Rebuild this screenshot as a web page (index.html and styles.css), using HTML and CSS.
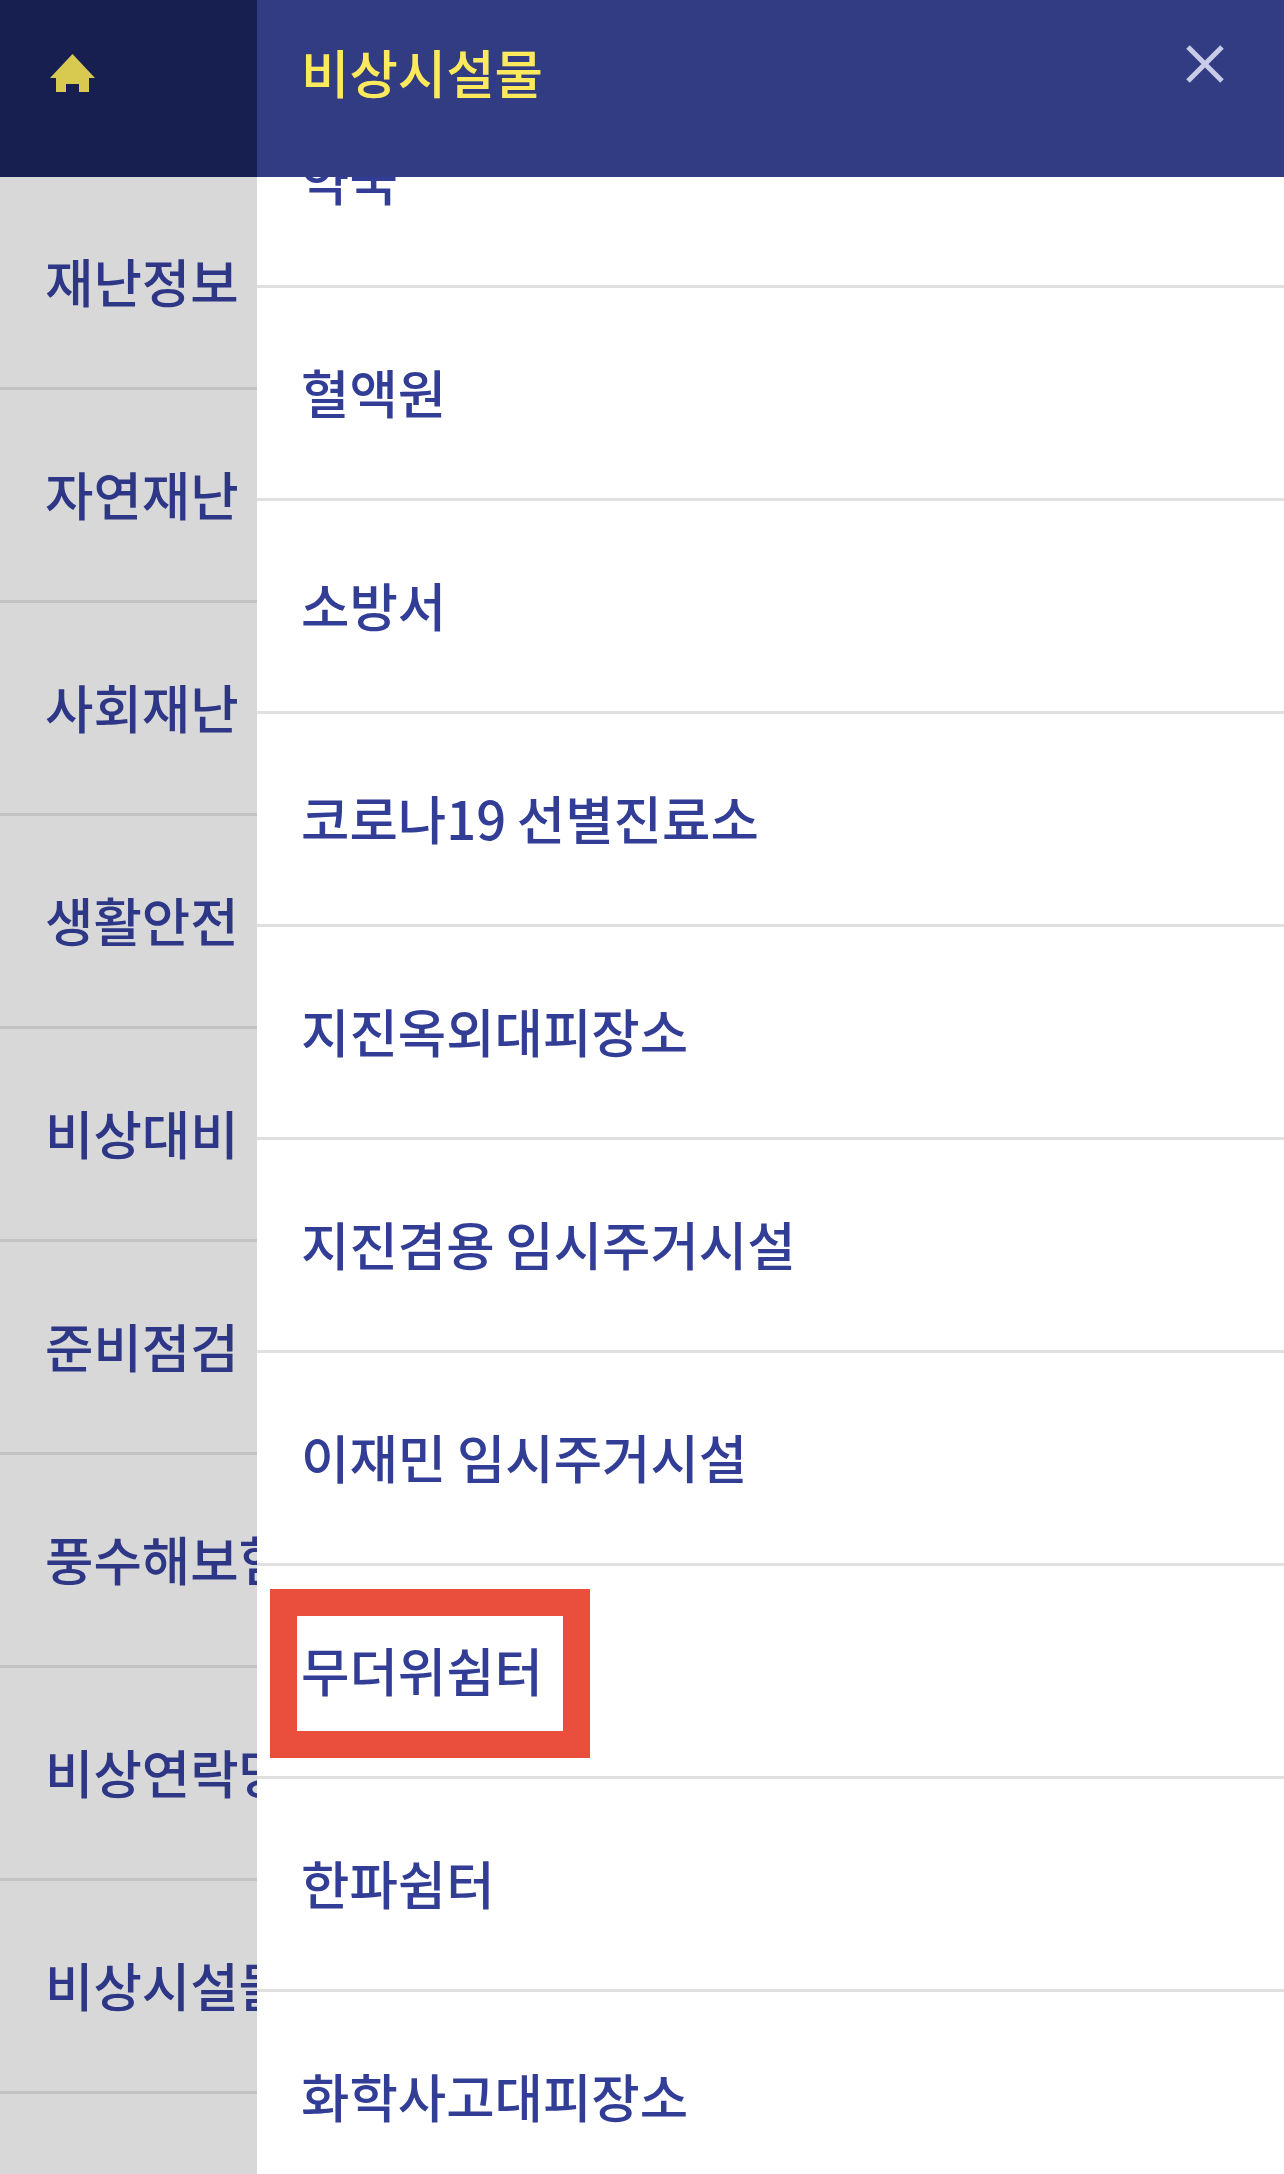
FILE: index.html
```html
<!DOCTYPE html>
<html lang="ko">
<head>
<meta charset="utf-8">
<title>비상시설물</title>
<link rel="stylesheet" href="styles.css">
</head>
<body>
<div class="app">
  <nav class="side">
    <a class="home" href="#" aria-label="홈">
      <svg class="home-icon" viewBox="0 0 45 38" aria-hidden="true"><path d="M22.5 0 45 24H39V38H29V30H16V38H6V24H0Z" fill="#d8c951"/></svg>
    </a>
    <ul class="side-list">
      <li class="side-item">재난정보</li>
      <li class="side-item">자연재난</li>
      <li class="side-item">사회재난</li>
      <li class="side-item">생활안전</li>
      <li class="side-item">비상대비</li>
      <li class="side-item">준비점검</li>
      <li class="side-item">풍수해보험</li>
      <li class="side-item">비상연락망</li>
      <li class="side-item">비상시설물</li>
    </ul>
  </nav>
  <main class="panel">
    <header class="panel-head">
      <h1 class="panel-title">비상시설물</h1>
      <svg class="close" viewBox="0 0 38 38" aria-hidden="true"><path d="M2 2 36 36M36 2 2 36" stroke="#c9cce8" stroke-width="5" fill="none"/></svg>
    </header>
    <ul class="facility-list">
      <li class="facility">약국</li>
      <li class="facility">혈액원</li>
      <li class="facility">소방서</li>
      <li class="facility">코로나19 선별진료소</li>
      <li class="facility">지진옥외대피장소</li>
      <li class="facility">지진겸용 임시주거시설</li>
      <li class="facility">이재민 임시주거시설</li>
      <li class="facility">무더위쉼터<span class="highlight"></span></li>
      <li class="facility">한파쉼터</li>
      <li class="facility">화학사고대피장소</li>
    </ul>
  </main>
</div>
</body>
</html>
```
FILE: styles.css
```css
* { box-sizing: border-box; }
html, body { margin: 0; padding: 0; }
body {
  width: 1284px;
  height: 2174px;
  overflow: hidden;
  background: #fff;
  font-family: "Noto Sans CJK KR", "Noto Sans", sans-serif;
  font-size: 52.6px;
  word-spacing: -4px;
}
ul { list-style: none; margin: 0; padding: 0; }
.app { display: flex; height: 2174px; }
.side { width: 257px; flex: none; background: #d8d8d8; overflow: hidden; }
.home {
  display: block;
  height: 177px;
  padding: 54px 0 0 50px;
  background: #171e50;
}
.home-icon { display: block; width: 45px; height: 38px; }
.side-item {
  height: 213px;
  padding: 0 0 5px 45px;
  display: flex;
  align-items: center;
  white-space: nowrap;
  border-bottom: 3px solid #c2c2c2;
  font-weight: 500;
  color: #2d3785;
}
.panel { flex: 1; min-width: 0; overflow: hidden; }
.panel-head {
  position: relative;
  z-index: 2;
  height: 177px;
  display: flex;
  justify-content: space-between;
  padding: 40px 60px 0 44px;
  background: #323c82;
}
.panel-title {
  margin: 0;
  font-size: inherit;
  font-weight: 500;
  line-height: 62px;
  color: #fdea5c;
}
.close { width: 38px; height: 38px; margin-top: 5px; flex: none; }
.facility-list { margin-top: -102px; }
.facility {
  position: relative;
  height: 213px;
  padding: 0 0 5px 44px;
  display: flex;
  align-items: center;
  border-bottom: 3px solid #e0e0e0;
  font-weight: 500;
  color: #323d96;
}
.highlight {
  position: absolute;
  left: 13px;
  top: 23px;
  width: 320px;
  height: 169px;
  border: 27px solid #ea4f3d;
}
```
